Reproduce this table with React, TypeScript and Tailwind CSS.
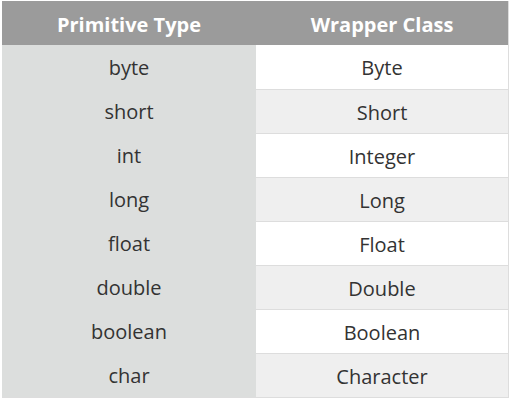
const rows = [
  ["byte", "Byte"],
  ["short", "Short"],
  ["int", "Integer"],
  ["long", "Long"],
  ["float", "Float"],
  ["double", "Double"],
  ["boolean", "Boolean"],
  ["char", "Character"],
];

export default function App() {
  return (
    <div className="w-[512px] h-[401px] bg-white pt-px pl-[2px]" style={{ fontFamily: '"Open Sans", sans-serif' }}>
      <div className="w-[507px] border-r border-b border-[#dddddd]">
        <div className="flex h-[44px] bg-[#9b9b9b] text-white font-bold text-[20px] pt-[3px]">
          <div className="w-[254px] flex items-center justify-center">Primitive Type</div>
          <div className="flex-1 flex items-center justify-center">Wrapper Class</div>
        </div>
        {rows.map(([p, w], i) => (
          <div key={p} className="flex h-[44px] text-[20px] text-[#333333]">
            <div className="w-[254px] bg-[#dcdedd] flex items-center justify-center pt-[2px]">{p}</div>
            <div
              className={
                "flex-1 flex items-center justify-center pt-[2px] " +
                (i > 0 ? "border-t border-[#dddddd] " : "") +
                (i % 2 === 0 ? "bg-white" : "bg-[#efefef]")
              }
            >
              {w}
            </div>
          </div>
        ))}
      </div>
    </div>
  );
}
